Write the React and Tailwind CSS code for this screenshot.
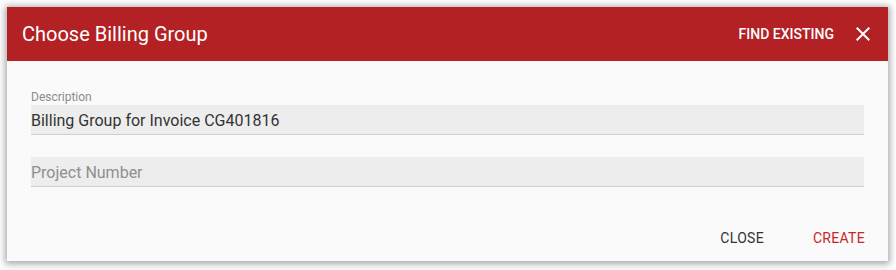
import React from 'react';

const CloseIcon = () => (
  <svg width="24" height="24" viewBox="0 0 24 24" fill="currentColor">
    <path d="M19 6.41 17.59 5 12 10.59 6.41 5 5 6.41 10.59 12 5 17.59 6.41 19 12 13.41 17.59 19 19 17.59 13.41 12z" />
  </svg>
);

const Field = ({ label, value, placeholder }) => (
  <div className="flex flex-col">
    {label && <label className="h-4 text-[12px] leading-4 text-[#8a8a8a]">{label}</label>}
    <div className="h-[30px] bg-[#ededed] border-b border-[#cfcfcf] flex items-center pt-[3px]">
      {value ? (
        <span className="text-[16px] text-[#333333]">{value}</span>
      ) : (
        <span className="text-[16px] text-[#8f8f8f]">{placeholder}</span>
      )}
    </div>
  </div>
);

export default function App() {
  return (
    <div className="w-[896px] h-[270px] bg-white p-[7px]" style={{ fontFamily: 'Roboto, "Liberation Sans", sans-serif' }}>
      <div className="w-[881px] h-[254px] bg-[#fafafa] flex flex-col shadow-[0_1px_7px_2px_rgba(0,0,0,0.35)]">
        <div className="h-[54px] bg-[#b32124] flex items-center pl-[15px] pr-[13px] text-white">
          <h2 className="text-[20px] font-normal flex-1">Choose Billing Group</h2>
          <button className="text-[14px] font-medium mr-[17px]">FIND EXISTING</button>
          <CloseIcon />
        </div>
        <div className="flex flex-col pt-[28px] px-6 gap-[22px]">
          <Field label="Description" value="Billing Group for Invoice CG401816" />
          <Field placeholder="Project Number" />
        </div>
        <div className="flex justify-end items-center mt-[33px] pr-[23px] h-9 gap-[49px]">
          <button className="text-[14px] font-normal tracking-[0.3px] text-[#333333]">CLOSE</button>
          <button className="text-[14px] font-normal tracking-[0.3px] text-[#c62828]">CREATE</button>
        </div>
      </div>
    </div>
  );
}
